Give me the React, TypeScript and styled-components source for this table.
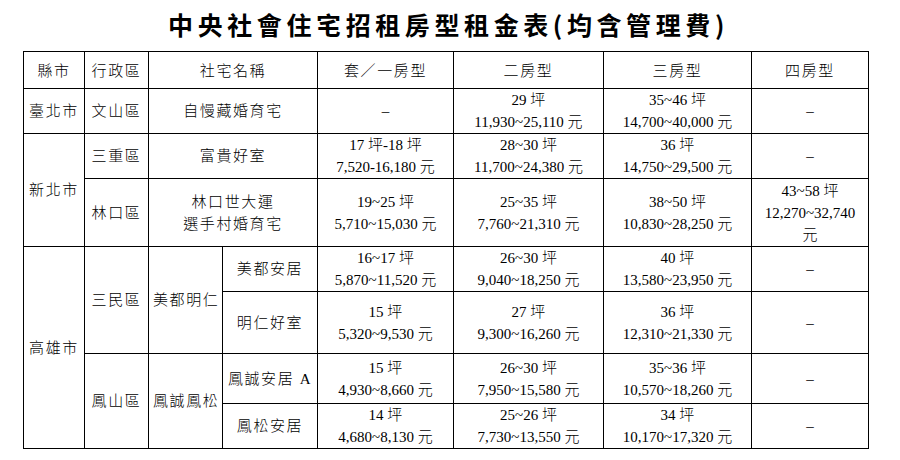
import styled, { createGlobalStyle } from 'styled-components';

const Global = createGlobalStyle`
  html, body {
    margin: 0;
    padding: 0;
    background: #fff;
  }
  body {
    font-family: 'Liberation Serif', 'Noto Sans CJK TC', serif;
    color: #000;
  }
`;

const Page = styled.div`
  width: 845px;
  margin-left: 23px;
`;

const Title = styled.h1`
  margin: 0;
  height: 51px;
  padding-left: 6px;
  line-height: 48px;
  text-align: center;
  font-family: 'Noto Sans CJK TC', sans-serif;
  font-size: 25px;
  font-weight: 700;
  letter-spacing: 4.6px;
  white-space: nowrap;
`;

const Sheet = styled.table`
  width: 845px;
  table-layout: fixed;
  border-collapse: collapse;
  font-size: 15px;
  line-height: 22px;
`;

const Row = styled.tr<{ $h: number }>`
  height: ${(p) => p.$h}px;
`;

const HeadCell = styled.th`
  border: 1px solid #000;
  padding: 0 4px;
  font-weight: 300;
  font-family: 'Noto Sans CJK TC', sans-serif;
  letter-spacing: 1.6px;
  text-align: center;
  vertical-align: middle;
`;

const Cell = styled.td<{ $name?: boolean }>`
  border: 1px solid #000;
  padding: 0 4px;
  text-align: center;
  vertical-align: middle;
  font-weight: 300;
  letter-spacing: ${(p) => (p.$name ? '1.6px' : '0')};
  white-space: nowrap;
`;

const Line = styled.span`
  display: block;
`;

const Dash = styled.span`
  font-family: 'Liberation Serif', serif;
`;

const widths = [61, 64, 74, 95, 136, 150, 148, 117];

function Lines({ items }: { items: string[] }) {
  return (
    <>
      {items.map((t, i) => (
        <Line key={i}>{t}</Line>
      ))}
    </>
  );
}

function Price({ area, rent }: { area: string; rent: string }) {
  return <Cell><Lines items={[area, rent]} /></Cell>;
}

function None() {
  return <Cell><Dash>–</Dash></Cell>;
}

export default function App() {
  return (
    <>
      <Global />
      <Page>
        <Title>中央社會住宅招租房型租金表(均含管理費)</Title>
        <Sheet>
          <colgroup>
            {widths.map((w, i) => (
              <col key={i} style={{ width: w }} />
            ))}
          </colgroup>
          <tbody>
            <Row $h={37}>
              <HeadCell>縣市</HeadCell>
              <HeadCell>行政區</HeadCell>
              <HeadCell colSpan={2}>社宅名稱</HeadCell>
              <HeadCell>套／一房型</HeadCell>
              <HeadCell>二房型</HeadCell>
              <HeadCell>三房型</HeadCell>
              <HeadCell>四房型</HeadCell>
            </Row>
            <Row $h={45}>
              <Cell $name>臺北市</Cell>
              <Cell $name>文山區</Cell>
              <Cell $name colSpan={2}>自慢藏婚育宅</Cell>
              <None />
              <Price area="29 坪" rent="11,930~25,110 元" />
              <Price area="35~46 坪" rent="14,700~40,000 元" />
              <None />
            </Row>
            <Row $h={45}>
              <Cell $name rowSpan={2}>新北市</Cell>
              <Cell $name>三重區</Cell>
              <Cell $name colSpan={2}>富貴好室</Cell>
              <Price area="17 坪-18 坪" rent="7,520-16,180 元" />
              <Price area="28~30 坪" rent="11,700~24,380 元" />
              <Price area="36 坪" rent="14,750~29,500 元" />
              <None />
            </Row>
            <Row $h={68}>
              <Cell $name>林口區</Cell>
              <Cell $name colSpan={2}>
                <Lines items={['林口世大運', '選手村婚育宅']} />
              </Cell>
              <Price area="19~25 坪" rent="5,710~15,030 元" />
              <Price area="25~35 坪" rent="7,760~21,310 元" />
              <Price area="38~50 坪" rent="10,830~28,250 元" />
              <Cell>
                <Lines items={['43~58 坪', '12,270~32,740', '元']} />
              </Cell>
            </Row>
            <Row $h={45}>
              <Cell $name rowSpan={4}>高雄市</Cell>
              <Cell $name rowSpan={2}>三民區</Cell>
              <Cell $name rowSpan={2}>美都明仁</Cell>
              <Cell $name>美都安居</Cell>
              <Price area="16~17 坪" rent="5,870~11,520 元" />
              <Price area="26~30 坪" rent="9,040~18,250 元" />
              <Price area="40 坪" rent="13,580~23,950 元" />
              <None />
            </Row>
            <Row $h={62}>
              <Cell $name>明仁好室</Cell>
              <Price area="15 坪" rent="5,320~9,530 元" />
              <Price area="27 坪" rent="9,300~16,260 元" />
              <Price area="36 坪" rent="12,310~21,330 元" />
              <None />
            </Row>
            <Row $h={50}>
              <Cell $name rowSpan={2}>鳳山區</Cell>
              <Cell $name rowSpan={2}>鳳誠鳳松</Cell>
              <Cell $name>鳳誠安居 A</Cell>
              <Price area="15 坪" rent="4,930~8,660 元" />
              <Price area="26~30 坪" rent="7,950~15,580 元" />
              <Price area="35~36 坪" rent="10,570~18,260 元" />
              <None />
            </Row>
            <Row $h={45}>
              <Cell $name>鳳松安居</Cell>
              <Price area="14 坪" rent="4,680~8,130 元" />
              <Price area="25~26 坪" rent="7,730~13,550 元" />
              <Price area="34 坪" rent="10,170~17,320 元" />
              <None />
            </Row>
          </tbody>
        </Sheet>
      </Page>
    </>
  );
}
